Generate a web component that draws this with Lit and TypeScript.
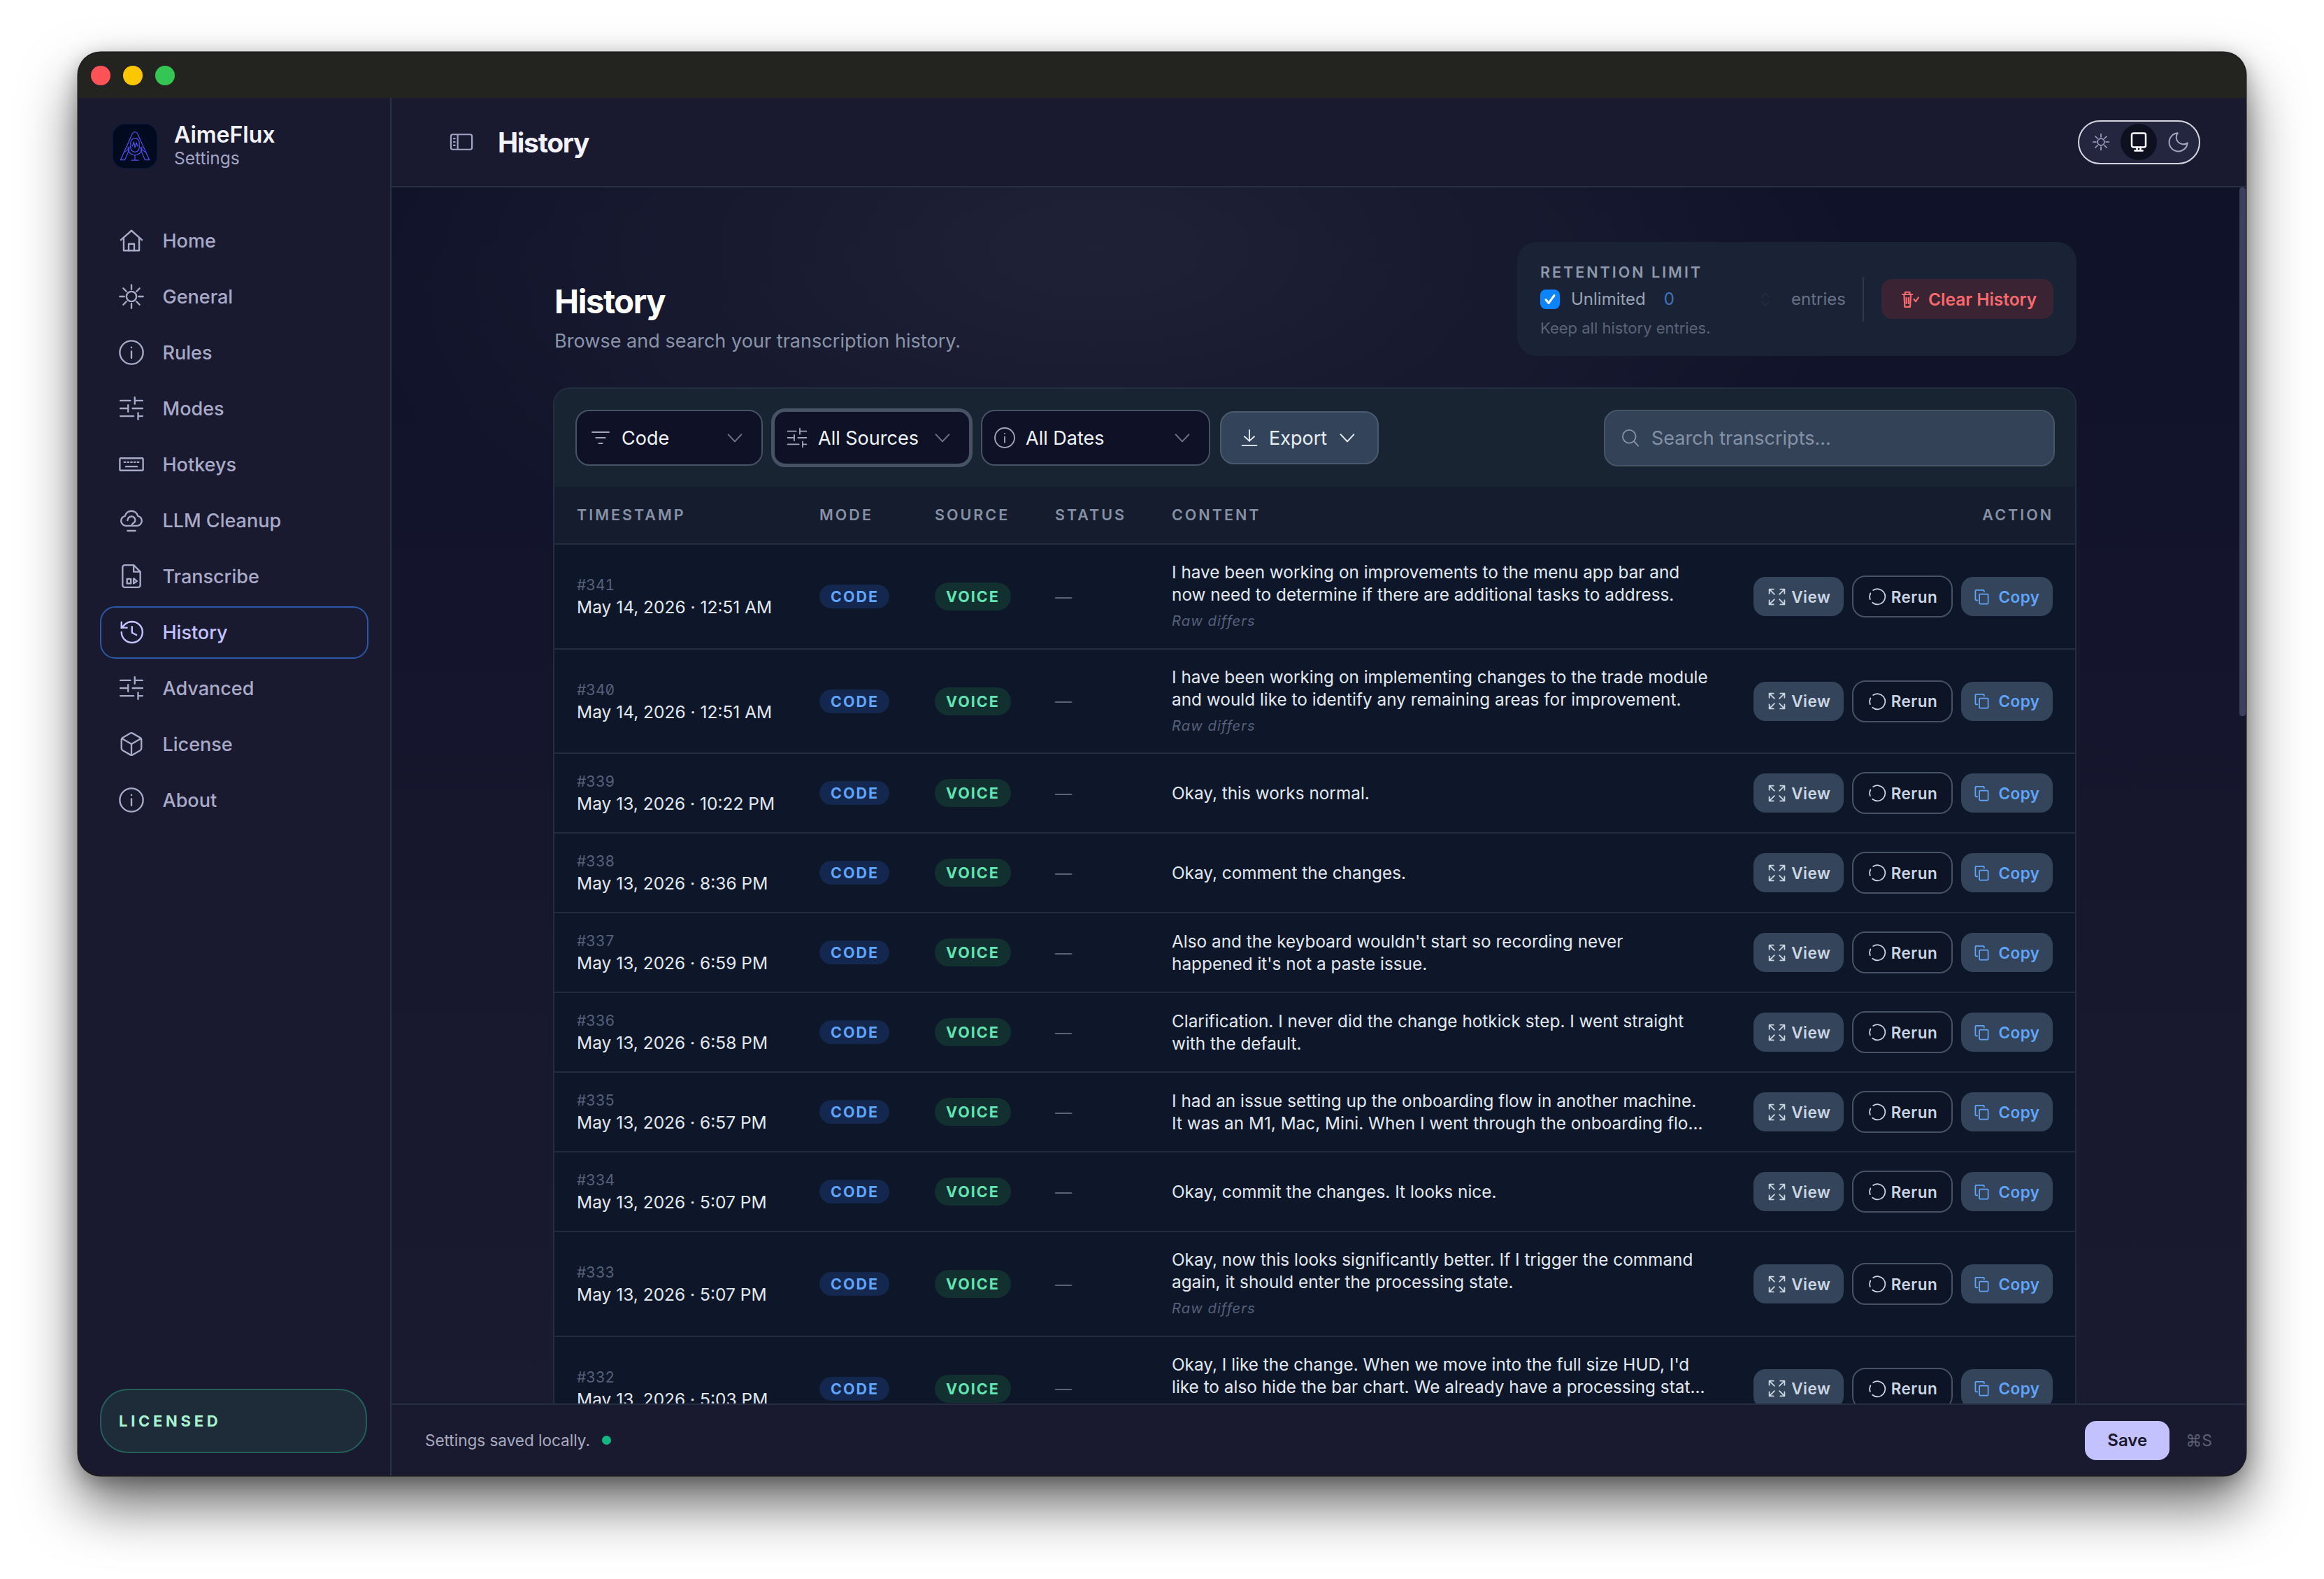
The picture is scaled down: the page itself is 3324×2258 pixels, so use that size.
import { LitElement, css, html, svg } from "lit";
import { customElement } from "lit/decorators.js";

const icons: Record<string, unknown> = {
  home: svg`<path d="M2.500 11.500 12 3l9.500 8.500"/><path d="M5 9.500V21h14V9.500"/><path d="M9.500 21v-6h5v6"/>`,
  sun: svg`<circle cx="12" cy="12" r="4.500"/><path d="M12 1.500v4M12 18.500v4M1.500 12h4M18.500 12h4M4.600 4.600l2.800 2.800M16.600 16.600l2.800 2.800M4.600 19.400l2.800-2.800M16.600 7.400l2.800-2.800"/>`,
  info: svg`<circle cx="12" cy="12" r="10.500"/><path d="M12 11v6"/><path d="M12 7.400v.2"/>`,
  sliders: svg`<path d="M22 5h-7M11 5H2M22 12h-9M9 12H2M22 19h-4M14 19H2M15 2v6M9 9v6M18 16v6"/>`,
  keyboard: svg`<rect x="1.500" y="6.500" width="21" height="11" rx="1"/><path d="M5.500 10h1M8.500 10h1M11.500 10h1M14.500 10h1M17.500 10h1M7 14h10"/>`,
  cloud: svg`<path d="M7 17a4.500 4.500 0 0 1-.8-8.900 6 6 0 0 1 11.600 0A4.500 4.500 0 0 1 17 17Z"/><path d="M8.500 12a3.500 3.500 0 0 1 7 0c0 2.500-3.500 2.500-3.500 5"/><path d="M8.500 21.500h7"/>`,
  file: svg`<path d="M14 2H6a2 2 0 0 0-2 2v16a2 2 0 0 0 2 2h12a2 2 0 0 0 2-2V8z"/><path d="M14 2v6h6"/><path d="M8 18.500v-4h3.500v4zM14 18.500v-4.500l3 2.500z"/>`,
  history: svg`<path d="M3 12a9.500 9.500 0 1 0 9.500-9.500A10 10 0 0 0 5.800 5.300L3 8"/><path d="M3 3v5h5"/><path d="M12.500 7v5.500l4 2"/>`,
  box: svg`<path d="M21 8a2 2 0 0 0-1-1.730l-7-4a2 2 0 0 0-2 0l-7 4A2 2 0 0 0 3 8v8a2 2 0 0 0 1 1.730l7 4a2 2 0 0 0 2 0l7-4A2 2 0 0 0 21 16Z"/><path d="m3.300 7 8.700 5 8.700-5"/><path d="M12 22V12"/>`,
  filter: svg`<path d="M3 6h18M7 12h10M10 18h4"/>`,
  chevron: svg`<path d="m5 8.500 7 7.500 7-7.500"/>`,
  download: svg`<path d="M12 2.500V16"/><path d="m6 10.500 6 5.500 6-5.500"/><path d="M3 21.500h18"/>`,
  search: svg`<circle cx="10.500" cy="10.500" r="8"/><path d="m16.500 16.500 5 5.500"/>`,
  expand: svg`<path d="m21 21-6-6m6 6v-5m0 5h-5M3 16v5m0 0h5m-5 0 6-6M21 8V3m0 0h-5m5 0-6 6M3 8V3m0 0h5M3 3l6 6"/>`,
  rerun: svg`<path d="M7 4.300A9.500 9.500 0 1 1 6.200 19.500"/><path d="M3.300 15.500a9.500 9.500 0 0 1 .4-7.500"/>`,
  copy: svg`<rect x="8.500" y="8" width="13" height="14.500" rx="1"/><path d="M5.500 17H3.500a1 1 0 0 1-1-1V3a1 1 0 0 1 1-1h11a1 1 0 0 1 1 1v1.500"/>`,
  trash: svg`<path d="M2 5.500h13M5.500 5.500V2.500h6v3M4 5.500l1 16.500h7l1-16.500M7 10v7.500M10 10v7.500"/><path d="m17 12 2.500 3 3.500-5.500"/>`,
  monitor: svg`<rect x="4" y="2" width="16" height="16" rx="2"/><path d="M10 18v3.500M14 18v3.500M7.500 22h9"/>`,
  moon: svg`<path d="M11 2.500a7.500 7.500 0 0 0 10.500 10.500A9.800 9.800 0 1 1 11 2.500Z"/>`,
  panel: svg`<rect x="2" y="3" width="28" height="20" rx="2.500"/><path d="M11 3v20"/><path d="M5 8.500h3M5 13h3M5 17.500h3"/>`,
  updown: svg`<path d="m7 9 5-5 5 5M7 15l5 5 5-5"/>`,
};

const icon = (name: string, cls = "") => html`<svg class="ico ${cls}" viewBox="0 0 24 24" aria-hidden="true">${icons[name]}</svg>`;

const NAV = [
  ["Home", "home"],
  ["General", "sun"],
  ["Rules", "info"],
  ["Modes", "sliders"],
  ["Hotkeys", "keyboard"],
  ["LLM Cleanup", "cloud"],
  ["Transcribe", "file"],
  ["History", "history"],
  ["Advanced", "sliders"],
  ["License", "box"],
  ["About", "info"],
];

type Row = { id: number; when: string; lines: string[]; raw?: boolean };

const ROWS: Row[] = [
  { id: 341, when: "May 14, 2026 · 12:51 AM", raw: true, lines: ["I have been working on improvements to the menu app bar and", "now need to determine if there are additional tasks to address."] },
  { id: 340, when: "May 14, 2026 · 12:51 AM", raw: true, lines: ["I have been working on implementing changes to the trade module", "and would like to identify any remaining areas for improvement."] },
  { id: 339, when: "May 13, 2026 · 10:22 PM", lines: ["Okay, this works normal."] },
  { id: 338, when: "May 13, 2026 · 8:36 PM", lines: ["Okay, comment the changes."] },
  { id: 337, when: "May 13, 2026 · 6:59 PM", lines: ["Also and the keyboard wouldn't start so recording never", "happened it's not a paste issue."] },
  { id: 336, when: "May 13, 2026 · 6:58 PM", lines: ["Clarification. I never did the change hotkick step. I went straight", "with the default."] },
  { id: 335, when: "May 13, 2026 · 6:57 PM", lines: ["I had an issue setting up the onboarding flow in another machine.", "It was an M1, Mac, Mini. When I went through the onboarding flo..."] },
  { id: 334, when: "May 13, 2026 · 5:07 PM", lines: ["Okay, commit the changes. It looks nice."] },
  { id: 333, when: "May 13, 2026 · 5:07 PM", raw: true, lines: ["Okay, now this looks significantly better. If I trigger the command", "again, it should enter the processing state."] },
  { id: 332, when: "May 13, 2026 · 5:03 PM", raw: true, lines: ["Okay, I like the change. When we move into the full size HUD, I'd", "like to also hide the bar chart. We already have a processing stat..."] },
];

@customElement("app-root")
export class AppRoot extends LitElement {
  static styles = css`
    :host {
      display: block;
      width: 3324px;
      height: 2258px;
      padding: 75px 0 0 112px;
      box-sizing: border-box;
      overflow: hidden;
      background: #fff;
      font-family: Inter, "Noto Sans", sans-serif;
      color: #e2e8f0;
    }
    * { box-sizing: border-box; }

    .ico {
      width: 24px;
      height: 24px;
      flex: none;
      fill: none;
      stroke: currentColor;
      stroke-width: 1.8;
      stroke-linecap: round;
      stroke-linejoin: round;
    }

    .window {
      width: 3100px;
      height: 2035px;
      display: flex;
      flex-direction: column;
      border-radius: 32px;
      overflow: hidden;
      background: #191a30;
      box-shadow: 0 0 0 1.500px #1c1c1c, 0 42px 80px rgba(0, 0, 0, 0.58), 0 8px 30px rgba(0, 0, 0, 0.3);
    }
    .titlebar {
      height: 65px;
      flex: none;
      display: flex;
      align-items: center;
      gap: 18px;
      padding-left: 18px;
      background: #232320;
    }
    .dot { width: 28px; height: 28px; border-radius: 50%; }
    .red { background: #ff5257; }
    .yellow { background: #fdc700; }
    .green { background: #33c653; }

    .body { flex: 1; min-height: 0; display: flex; }

    .sidebar {
      width: 448px;
      flex: none;
      display: flex;
      flex-direction: column;
      padding: 35px 31px 32px 31px;
      border-right: 2px solid #293247;
      background: #191a30;
    }
    .brand { display: flex; align-items: center; gap: 25px; padding-left: 19px; }
    .logo {
      width: 62px;
      height: 62px;
      flex: none;
      border-radius: 17px;
      background: #020a20;
      box-shadow: 0 0 0 1px #06163a;
    }
    .logo svg { display: block; width: 100%; height: 100%; fill: none; stroke: #4d4fe6; stroke-width: 1.200; stroke-linejoin: round; stroke-linecap: round; }
    .brand-name { font-size: 32px; line-height: 36px; font-weight: 600; color: #f3f2fb; }
    .brand-sub { font-size: 24.500px; line-height: 31px; color: #a4a5c4; }

    nav { display: flex; flex-direction: column; margin-top: 62px; }
    .nav-item {
      height: 80px;
      display: flex;
      align-items: center;
      gap: 26px;
      padding-left: 23.500px;
      font-size: 27px;
      font-weight: 500;
      color: #a9aac8;
      border: 2.500px solid transparent;
      border-radius: 22px;
    }
    .nav-item .ico { width: 38px; height: 38px; stroke-width: 1.500; }
    .nav-item.active { height: 75px; margin: 2.500px 0; color: #c5c3ff; border-color: #2c58a6; }
    .licensed {
      margin-top: auto;
      height: 92px;
      display: flex;
      align-items: center;
      padding-left: 25px;
      margin-right: 2px;
      border: 2px solid #24605a;
      border-radius: 40px;
      background: #1e2b38;
      color: #a7f3d0;
      font-size: 22px;
      font-weight: 700;
      letter-spacing: 4.700px;
    }

    .right { flex: 1; min-width: 0; display: flex; flex-direction: column; }
    .topbar {
      height: 128px;
      flex: none;
      display: flex;
      align-items: center;
      padding: 0 65px 0 81px;
      border-bottom: 2.500px solid #272f44;
      background: #191a30;
    }
    .panel-ico { width: 38px; height: 28px; flex: none; fill: none; stroke: #a4a5c4; stroke-width: 2; }
    .top-title { margin-left: 33px; font-size: 39px; font-weight: 700; letter-spacing: -1.300px; color: #f3f2fb; }
    .theme {
      margin-left: auto;
      width: 175px;
      height: 63px;
      display: flex;
      align-items: center;
      justify-content: space-between;
      padding: 0 0 0 18px;
      border: 2.500px solid #d5d5df;
      border-radius: 32px;
      background: #24263f;
      color: #a4a5c4;
    }
    .theme .ico { width: 26px; height: 26px; stroke-width: 1.500; }
    .theme-on {
      width: 52px;
      height: 52px;
      display: flex;
      align-items: center;
      justify-content: center;
      border-radius: 26px;
      background: #0e1020;
      color: #fff;
    }
    .theme-on .ico { width: 30px; height: 30px; stroke-width: 2; }
    .theme .moon { width: 32px; height: 32px; margin-right: 13px; }

    .scroll {
      position: relative;
      flex: 1;
      min-height: 0;
      overflow: hidden;
      padding: 78px 242px 0 231px;
      background:
        radial-gradient(1100px 520px at 38% 5%, #1f2136 0%, rgba(31, 33, 54, 0) 100%),
        linear-gradient(180deg, #10122a 0%, #14152c 35%, #1a1b31 100%);
    }
    .thumb { position: absolute; top: 0; right: 0; width: 9px; height: 756px; background: #3c3f5e; border-radius: 4px; }

    .page-head { display: flex; justify-content: space-between; align-items: flex-end; }
    .page-title { margin-left: 2px; font-size: 47px; line-height: 56px; font-weight: 700; letter-spacing: -1.400px; color: #fff; }
    .page-sub { margin: 12px 0 4px 2px; font-size: 27.100px; line-height: 34px; color: #8a94a8; }

    .retention {
      width: 800px;
      height: 163px;
      display: flex;
      align-items: center;
      padding: 0 33px 0 33px;
      border-radius: 28px;
      background: #1a2336;
    }
    .ret-left { flex: 1; min-width: 0; padding-top: 2px; }
    .ret-label { font-size: 21.500px; line-height: 26px; font-weight: 600; letter-spacing: 3px; color: #8f99ab; }
    .ret-row { display: flex; align-items: center; margin-top: 12px; height: 28px; font-size: 24px; color: #9aa3b5; }
    .check { width: 28px; height: 28px; border-radius: 8px; background: #0a84ff; margin-right: 16px; }
    .check svg { display: block; width: 100%; height: 100%; fill: none; stroke: #fff; stroke-width: 3; stroke-linecap: round; stroke-linejoin: round; }
    .ret-zero { margin-left: 26px; color: #3f74bb; }
    .ret-step { margin-left: auto; margin-right: 24px; width: 26px; height: 26px; color: #232e42; stroke-width: 1.500; }
    .ret-entries { margin-right: 24px; color: #677185; }
    .ret-note { margin-top: 14px; font-size: 22px; line-height: 26px; color: #5a6478; }
    .ret-div { width: 2px; height: 64px; background: #2e3b4e; margin-right: 25px; }
    .clear {
      width: 246px;
      height: 57px;
      display: flex;
      align-items: center;
      gap: 12px;
      padding-left: 27px;
      border-radius: 15px;
      background: #3a2333;
      color: #f96a6c;
      font-size: 24.500px;
      font-weight: 600;
    }
    .clear .ico { width: 28px; height: 26px; stroke-width: 2; }

    .card {
      margin-top: 45px;
      border: 2px solid #232e42;
      border-bottom: 0;
      border-radius: 24px 24px 0 0;
      overflow: hidden;
      background: #0e1729;
    }
    .toolbar {
      height: 140px;
      display: flex;
      align-items: center;
      padding: 0 29px 0 30px;
      background: #192433;
    }
    .select {
      height: 80px;
      display: flex;
      align-items: center;
      padding: 0 22px 0 18px;
      border: 2.500px solid #465266;
      border-radius: 20px;
      background: #0f1226;
      font-size: 27px;
      font-weight: 400;
      color: #f0f4f9;
    }
    .select .lead { width: 32px; height: 32px; color: #a1a7bb; stroke-width: 1.400; margin-right: 14px; }
    .select .chev { width: 32px; height: 32px; margin-left: auto; color: #6d7290; stroke-width: 1.500; }
    .s-code { width: 268px; }
    .s-source { width: 288px; margin-left: 12px; height: 84px; border-width: 5px; padding-left: 16px; }
    .s-date { width: 328px; margin-left: 12px; padding-left: 16px; }
    .export {
      width: 227px;
      height: 76px;
      margin-left: 14px;
      display: flex;
      align-items: center;
      padding-left: 26px;
      border: 2px solid #4a5a6e;
      border-radius: 20px;
      background: #33445a;
      font-size: 27px;
      color: #e8eef6;
    }
    .export .ico { width: 28px; height: 28px; stroke-width: 1.600; margin-right: 14px; }
    .export .chev { width: 32px; height: 32px; stroke-width: 1.500; margin: 0 0 0 13px; }
    .search {
      width: 645px;
      height: 81px;
      margin-left: auto;
      display: flex;
      align-items: center;
      gap: 16px;
      padding-left: 22px;
      border: 2.500px solid #475569;
      border-radius: 20px;
      background: #334257;
      font-size: 27px;
      color: #8492a8;
    }
    .search .ico { width: 28px; height: 28px; stroke-width: 1.600; }

    .row {
      display: grid;
      grid-template-columns: 347px 165px 172px 167px 1fr auto;
      align-items: center;
      padding: 0 32px;
      border-bottom: 2.500px solid #222c3f;
    }
    .head {
      height: 83px;
      padding-bottom: 2px;
      background: #141c2e;
      font-size: 21.500px;
      font-weight: 600;
      letter-spacing: 3px;
      color: #8791a5;
    }
    .head .end { justify-self: end; margin-right: -1px; }
    .data { min-height: 114px; padding-top: 23px; padding-bottom: 22.500px; }

    .rid { font-size: 21px; line-height: 30px; color: #56607a; font-feature-settings: "tnum", "zero"; }
    .when { font-size: 24.500px; line-height: 32px; color: #e2e8f0; }
    .badge {
      justify-self: start;
      display: flex;
      align-items: center;
      border-radius: 17px;
      font-size: 21.500px;
      font-weight: 700;
      letter-spacing: 2px;
    }
    .code { height: 34px; padding: 0 15px 0 16px; background: #14274e; color: #60a5fa; }
    .voice { height: 40px; padding: 0 16px; border-radius: 20px; background: #12302f; color: #62e5b2; }
    .dash { color: #5a6478; font-size: 24px; }
    .text { font-size: 24.350px; line-height: 32px; color: #e2e8f0; white-space: nowrap; }
    .raw { margin-top: 6px; font-size: 20.300px; line-height: 32px; font-style: italic; letter-spacing: 1px; color: #56607a; }

    .actions { display: flex; align-items: center; gap: 12px; }
    .btn {
      height: 56px;
      display: flex;
      align-items: center;
      justify-content: center;
      border-radius: 17px;
      background: #34445a;
      font-size: 22.500px;
      font-weight: 600;
      letter-spacing: 0.500px;
      color: #cbd5e1;
    }
    .view { width: 129px; gap: 6.500px; }
    .view .ico { width: 29px; height: 29px; stroke-width: 1.500; }
    .rerun { width: 144px; height: 60px; gap: 6px; border: 2.500px solid #465266; border-radius: 19px; background: #0c1426; }
    .rerun .ico { width: 28px; height: 28px; stroke-width: 1.500; }
    .copy { width: 131px; gap: 12px; color: #60a5fa; }
    .copy .ico { width: 23px; height: 23px; stroke-width: 1.800; }

    .footer {
      height: 103px;
      flex: none;
      display: flex;
      align-items: center;
      padding: 0 48px 0 48px;
      border-top: 2.500px solid #282f45;
      background: #191a30;
      font-size: 22.500px;
      color: #a9aabf;
    }
    .status-dot { width: 13px; height: 13px; border-radius: 50%; background: #10b981; margin-left: 17px; }
    .save {
      margin-left: auto;
      width: 121px;
      height: 56px;
      display: flex;
      align-items: center;
      justify-content: center;
      border-radius: 16px;
      background: #c4c1ff;
      color: #191a2e;
      font-size: 24px;
      font-weight: 600;
    }
    .kbd { margin-left: 23px; font-size: 23px; color: #5c5d74; }
  `;

  private renderRow(r: Row) {
    return html`
      <div class="row data">
        <div>
          <div class="rid">#${r.id}</div>
          <div class="when">${r.when}</div>
        </div>
        <div class="badge code">CODE</div>
        <div class="badge voice">VOICE</div>
        <div class="dash">—</div>
        <div>
          ${r.lines.map((l) => html`<div class="text">${l}</div>`)}
          ${r.raw ? html`<div class="raw">Raw differs</div>` : ""}
        </div>
        <div class="actions">
          <div class="btn view">${icon("expand")}View</div>
          <div class="btn rerun">${icon("rerun")}Rerun</div>
          <div class="btn copy">${icon("copy")}Copy</div>
        </div>
      </div>
    `;
  }

  render() {
    return html`
      <div class="window">
        <div class="titlebar">
          <div class="dot red"></div>
          <div class="dot yellow"></div>
          <div class="dot green"></div>
        </div>
        <div class="body">
          <aside class="sidebar">
            <div class="brand">
              <div class="logo">
                <svg viewBox="0 0 60 60" aria-hidden="true">
                  <path d="M10 49 26.500 12.500Q30 8 33.500 12.500L50 49H44L38 35M10 49H16L22 35"/>
                  <path d="M15 38.500C19 36 22 34 23.500 31M45 38.500C41 36 38 34 36.500 31"/>
                  <rect x="24" y="19" width="12" height="19" rx="6"/>
                  <path d="M20.500 31v2a9.500 9.500 0 0 0 19 0v-2"/>
                  <path d="M30 42.500V49M25 49.500h10"/>
                  <path d="M26.500 30l2-6 1.500 8 2-7 1.500 5"/>
                </svg>
              </div>
              <div>
                <div class="brand-name">AimeFlux</div>
                <div class="brand-sub">Settings</div>
              </div>
            </div>
            <nav>
              ${NAV.map(([label, ic]) => html`<div class="nav-item ${label === "History" ? "active" : ""}">${icon(ic)}${label}</div>`)}
            </nav>
            <div class="licensed">LICENSED</div>
          </aside>
          <div class="right">
            <header class="topbar">
              <svg class="panel-ico" viewBox="0 0 32 26" aria-hidden="true">${icons.panel}</svg>
              <div class="top-title">History</div>
              <div class="theme">
                ${icon("sun")}
                <div class="theme-on">${icon("monitor")}</div>
                ${icon("moon", "moon")}
              </div>
            </header>
            <div class="scroll">
              <div class="thumb"></div>
              <div class="page-head">
                <div>
                  <div class="page-title">History</div>
                  <div class="page-sub">Browse and search your transcription history.</div>
                </div>
                <div class="retention">
                  <div class="ret-left">
                    <div class="ret-label">RETENTION LIMIT</div>
                    <div class="ret-row">
                      <div class="check"><svg viewBox="0 0 28 28" aria-hidden="true"><path d="m8 14.500 4 5 8-11"/></svg></div>
                      Unlimited
                      <span class="ret-zero">0</span>
                      ${icon("updown", "ret-step")}
                      <span class="ret-entries">entries</span>
                    </div>
                    <div class="ret-note">Keep all history entries.</div>
                  </div>
                  <div class="ret-div"></div>
                  <div class="clear">${icon("trash")}Clear History</div>
                </div>
              </div>
              <div class="card">
                <div class="toolbar">
                  <div class="select s-code">${icon("filter", "lead")}Code${icon("chevron", "chev")}</div>
                  <div class="select s-source">${icon("sliders", "lead")}All Sources${icon("chevron", "chev")}</div>
                  <div class="select s-date">${icon("info", "lead")}All Dates${icon("chevron", "chev")}</div>
                  <div class="export">${icon("download")}Export${icon("chevron", "chev")}</div>
                  <div class="search">${icon("search")}Search transcripts...</div>
                </div>
                <div class="row head">
                  <div>TIMESTAMP</div>
                  <div>MODE</div>
                  <div>SOURCE</div>
                  <div>STATUS</div>
                  <div>CONTENT</div>
                  <div class="end">ACTION</div>
                </div>
                ${ROWS.map((r) => this.renderRow(r))}
              </div>
            </div>
            <footer class="footer">
              Settings saved locally.
              <div class="status-dot"></div>
              <div class="save">Save</div>
              <div class="kbd">⌘S</div>
            </footer>
          </div>
        </div>
      </div>
    `;
  }
}

declare global {
  interface HTMLElementTagNameMap {
    "app-root": AppRoot;
  }
}
